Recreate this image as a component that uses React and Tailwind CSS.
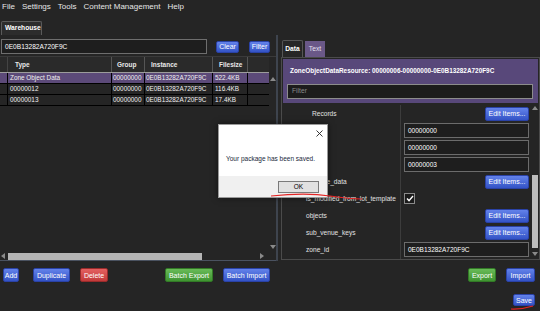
import React from "react";

// Small colored action button used across the editor
const Btn = ({ children, color = "blue", className = "" }) => {
  const colors = {
    blue: "from-[#6382ea] to-[#3453c6] border-[#2a42a6]",
    red: "from-[#e46060] to-[#c23a3a] border-[#9a2b2b]",
    green: "from-[#69bb58] to-[#3f9431] border-[#327a26]",
  };
  return (
    <div
      className={`flex items-center justify-center rounded-[2px] border bg-linear-to-b ${colors[color]} text-[7px] leading-none text-white ${className}`}
    >
      {children}
    </div>
  );
};

const Arrow = ({ dir }) => {
  const pts = {
    up: "0,4 3,0 6,4",
    down: "0,0 3,4 6,0",
    left: "4,0 0,3 4,6",
    right: "0,0 4,3 0,6",
  };
  const vertical = dir === "up" || dir === "down";
  return (
    <svg width={vertical ? 6 : 4} height={vertical ? 4 : 6} viewBox={vertical ? "0 0 6 4" : "0 0 4 6"}>
      <polygon points={pts[dir]} fill="#8a8a8a" />
    </svg>
  );
};

const rows = [
  { type: "Zone Object Data", group: "00000000", instance: "0E0B13282A720F9C", size: "522.4KB", selected: true },
  { type: "00000012", group: "00000000", instance: "0E0B13282A720F9C", size: "116.4KB" },
  { type: "00000013", group: "00000000", instance: "0E0B13282A720F9C", size: "17.4KB" },
];

const props = [
  { label: "Records", kind: "btn", indent: true },
  { label: "id", kind: "input", value: "00000000" },
  { label: "lot_id", kind: "input", value: "00000000" },
  { label: "version", kind: "input", value: "00000003" },
  { label: "furniture_data", kind: "btn" },
  { label: "is_modified_from_lot_template", kind: "check" },
  { label: "objects", kind: "btn" },
  { label: "sub_venue_keys", kind: "btn" },
  { label: "zone_id", kind: "input", value: "0E0B13282A720F9C" },
];

const WarehouseTable = () => (
  <div className="mt-[2px] flex h-[205px] w-[276px] flex-col border-t border-[#3a3a3a]">
    <div className="flex flex-1">
      <div className="w-[269px]">
        {/* header */}
        <div className="flex h-[16px] items-center border-b border-[#9c9c9c] bg-[#2a2a2a] text-[6.5px] font-bold text-[#e8e8e8]">
          <div className="h-full w-[8px] border-r border-[#444]" />
          <div className="flex h-full w-[104px] items-center border-r border-[#555] pl-[7px]">Type</div>
          <div className="flex h-full w-[33px] items-center border-r border-[#555] pl-[5px]">Group</div>
          <div className="flex h-full w-[68px] items-center border-r border-[#555] pl-[6px]">Instance</div>
          <div className="flex h-full w-[35px] items-center border-r border-[#555] pl-[6px]">Filesize</div>
          <div className="flex-1" />
        </div>
        {rows.map((r, i) => (
          <div
            key={i}
            className={`flex h-[11px] overflow-hidden border-b border-black text-[6.4px] leading-[10px] whitespace-nowrap text-[#f0f0f0] ${
              r.selected ? "bg-[#5c4a79]" : ""
            }`}
          >
            <div className="w-[8px] border-r border-black" />
            <div className="w-[104px] border-r border-black pl-[2px]">{r.type}</div>
            <div className="w-[33px] overflow-hidden border-r border-black pl-[1px]">{r.group}</div>
            <div className="w-[68px] overflow-hidden border-r border-black pl-[1px]">{r.instance}</div>
            <div className="w-[35px] border-r border-black pl-[2px]">{r.size}</div>
            <div className="flex-1" />
          </div>
        ))}
      </div>
      {/* vertical scrollbar */}
      <div className="flex w-[7px] flex-col items-center justify-between pt-[20px] pb-[3px]">
        <Arrow dir="up" />
        <Arrow dir="down" />
      </div>
    </div>
    {/* horizontal scrollbar */}
    <div className="flex h-[9px] items-center border-b border-[#4a5260] pl-[1px] pr-[12px]">
      <Arrow dir="left" />
      <div className="ml-[3px] h-[7px] w-[194px] bg-[#b5b5b5]" />
      <div className="flex-1" />
      <Arrow dir="right" />
    </div>
  </div>
);

const PropertyRow = ({ p }) => (
  <div className="flex h-[17px]">
    <div
      className={`flex w-[118px] items-center text-[6.6px] text-[#e2e2e2] ${p.indent ? "pl-[30px]" : "pl-[24px]"}`}
    >
      {p.label}
    </div>
    <div className="w-[1px] bg-[#3c3c3c]" />
    <div className="flex flex-1 items-center justify-end pl-[3px] pr-[1px]">
      {p.kind === "btn" && <Btn className="h-[14px] w-[44px]">Edit Items...</Btn>}
      {p.kind === "input" && (
        <div className="flex h-[15px] w-full items-center border border-[#6c6c6c] bg-[#1e1e1e] pl-[3px] text-[6.5px] text-white">
          {p.value}
        </div>
      )}
      {p.kind === "check" && (
        <div className="mr-auto flex h-[11px] w-[11px] items-center justify-center border border-[#8a8a8a] bg-[#1a1a1a]">
          <svg width="8" height="7" viewBox="0 0 8 7">
            <path d="M1 3.6 L3 5.6 L7 1" fill="none" stroke="#fff" strokeWidth="1.4" />
          </svg>
        </div>
      )}
    </div>
  </div>
);

const App = () => {
  return (
    <div className="relative flex h-[311px] w-[540px] flex-col overflow-hidden bg-[#252525] font-['Liberation_Sans',Arial,sans-serif] text-white">
      {/* menu bar */}
      <div className="flex h-[14px] items-center gap-[7px] pl-[2px] text-[8px] text-[#e6e6e6]">
        <span>File</span>
        <span>Settings</span>
        <span>Tools</span>
        <span>Content Management</span>
        <span>Help</span>
      </div>

      <div className="flex flex-1">
        {/* left: warehouse */}
        <div className="flex w-[276px] flex-col pt-[7px]">
          <div className="ml-[1px] flex h-[14px] w-[41px] items-center rounded-t-[2px] border border-b-0 border-[#5a5a5a] bg-[#2c2c2c] px-[3px] text-[6.7px] font-bold">
            Warehouse
          </div>
          <div className="mt-[4px] flex h-[15px] items-center">
            <div className="ml-[1px] flex h-[15px] w-[206px] items-center border border-[#6e6e6e] bg-[#1e1e1e] pl-[3px] text-[6.6px]">
              0E0B13282A720F9C
            </div>
            <Btn className="ml-[9px] h-[12px] w-[23px]">Clear</Btn>
            <Btn className="ml-[10px] h-[12px] w-[21px]">Filter</Btn>
          </div>
          <WarehouseTable />
          <div className="mt-[7px] flex h-[14px] items-center">
            <Btn className="ml-[3px] h-[14px] w-[16px]">Add</Btn>
            <Btn className="ml-[14px] h-[14px] w-[37px]">Duplicate</Btn>
            <Btn color="red" className="ml-[10px] h-[14px] w-[28px]">Delete</Btn>
            <Btn color="green" className="ml-[57px] h-[14px] w-[48px]">Batch Export</Btn>
            <Btn className="ml-[10px] h-[14px] w-[47px]">Batch Import</Btn>
          </div>
        </div>

        {/* splitter */}
        <div className="mt-[21px] h-[226px] w-[2px] bg-[#3e444e]" />

        {/* right: resource editor */}
        <div className="ml-[3px] flex w-[259px] flex-col pt-[26px]">
          <div className="flex h-[17px] items-end gap-[2px] pl-[1px]">
            <div className="flex h-[17px] w-[21px] items-center justify-center rounded-t-[2px] border border-b-0 border-[#555] bg-[#262626] text-[6.7px] font-bold">
              Data
            </div>
            <div className="flex h-[16px] w-[20px] items-center justify-center bg-[#6a5888] text-[6.7px] text-[#e6e0ee]">
              Text
            </div>
          </div>
          <div className="flex h-[203px] flex-col border border-[#4b4b4b]">
            <div className="mx-[1px] mt-[1px] flex h-[44px] flex-col bg-[#58487a] px-[4px] pt-[7px]">
              <div className="pl-[3px] text-[6.4px] font-bold leading-[9px]">
                ZoneObjectDataResource: 00000006-00000000-0E0B13282A720F9C
              </div>
              <div className="mt-[9px] flex h-[15px] w-[246px] items-center border border-[#8c8c8c] bg-[#1c1c1c] pl-[4px] text-[6.7px] text-[#8a8a8a]">
                Filter
              </div>
            </div>
            <div className="flex flex-1">
              <div className="flex flex-1 flex-col pt-[2px]">
                {props.map((p) => (
                  <PropertyRow key={p.label} p={p} />
                ))}
                <div className="flex flex-1">
                  <div className="w-[118px]" />
                  <div className="w-[1px] bg-[#3c3c3c]" />
                </div>
              </div>
              <div className="flex w-[9px] flex-col items-center pt-[3px] pb-[3px]">
                <Arrow dir="up" />
                <div className="mt-[65px] h-[73px] w-[6px] bg-[#bdbdbd]" />
                <div className="mt-auto">
                  <Arrow dir="down" />
                </div>
              </div>
            </div>
          </div>
          <div className="mt-[8px] flex h-[14px] items-center">
            <Btn color="green" className="ml-[187px] h-[14px] w-[28px]">Export</Btn>
            <Btn className="ml-[10px] h-[14px] w-[29px]">Import</Btn>
          </div>
          <div className="mt-[12px] flex">
            <Btn className="ml-[232px] h-[12px] w-[22px]">Save</Btn>
          </div>
        </div>
      </div>

      {/* message box */}
      <div className="absolute left-[218px] top-[124px] flex h-[74px] w-[110px] flex-col border border-[#9a9a9a] bg-white shadow-[0_0_6px_rgba(0,0,0,0.55)]">
        <div className="relative h-[51px]">
          <svg className="absolute right-[4px] top-[5px]" width="7" height="7" viewBox="0 0 7 7">
            <path d="M0.5 0.5 L6.5 6.5 M6.5 0.5 L0.5 6.5" stroke="#222" strokeWidth="0.9" />
          </svg>
          <div className="absolute left-[7px] top-[29px] text-[6.5px] leading-[9px] text-[#1a1f3a]">
            Your package has been saved.
          </div>
        </div>
        <div className="flex flex-1 items-start justify-end bg-[#f0f0f0] pr-[8px] pt-[5px]">
          <div className="flex h-[12px] w-[41px] items-center justify-center border border-[#7a7a7a] bg-[#e1e1e1] text-[6.5px] text-black">
            OK
          </div>
        </div>
      </div>

      {/* hand-drawn red marks */}
      <svg className="pointer-events-none absolute left-0 top-0" width="540" height="311">
        <path d="M271 196 C 290 194, 310 193, 330 196 S 352 199, 362 199" fill="none" stroke="#e42424" strokeWidth="1.2" />
        <path d="M511 309 Q 522 309.5 533 306" fill="none" stroke="#e42424" strokeWidth="1.2" />
      </svg>
    </div>
  );
};

export default App;
